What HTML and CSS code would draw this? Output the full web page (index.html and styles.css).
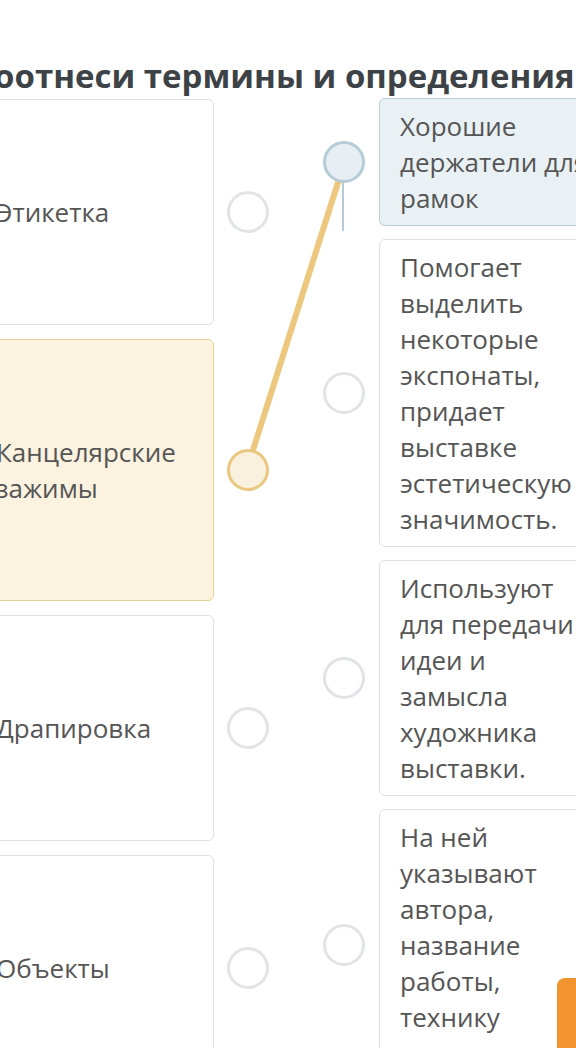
FILE: index.html
```html
<!DOCTYPE html>
<html lang="ru">
<head>
<meta charset="utf-8">
<title>Соотнеси термины и определения</title>
<link rel="stylesheet" href="styles.css">
</head>
<body>
<div class="page">
  <h1 class="title">Соотнеси термины и определения</h1>
  <div class="board">
    <svg class="links" width="400" height="600" viewBox="0 0 400 600">
      <line x1="368" y1="172" x2="368" y2="231" stroke="#b4cbd6" stroke-width="2"/>
      <line x1="369.5" y1="162" x2="272" y2="469" stroke="#ecc77d" stroke-width="6" stroke-linecap="round"/>
    </svg>
    <div class="col col-left">
      <div class="term">
        <div class="card">Этикетка</div>
        <span class="dot"></span>
      </div>
      <div class="term">
        <div class="card card-yellow">Канцелярские зажимы</div>
        <span class="dot dot-yellow"></span>
      </div>
      <div class="term">
        <div class="card">Драпировка</div>
        <span class="dot"></span>
      </div>
      <div class="term">
        <div class="card">Объекты</div>
        <span class="dot"></span>
      </div>
    </div>
    <div class="col col-right">
      <div class="def">
        <span class="dot dot-blue"></span>
        <div class="card card-blue">Хорошие держатели для рамок</div>
      </div>
      <div class="def">
        <span class="dot"></span>
        <div class="card">Помогает выделить некоторые экспонаты, придает выставке эстетическую значимость.</div>
      </div>
      <div class="def">
        <span class="dot"></span>
        <div class="card">Используют для передачи идеи и замысла художника выставки.</div>
      </div>
      <div class="def">
        <span class="dot"></span>
        <div class="card">На ней указывают автора, название работы, технику исполнения</div>
      </div>
    </div>
  </div>
</div>
<div class="action"></div>
</body>
</html>
```
FILE: styles.css
```css
html, body {
  margin: 0;
  padding: 0;
  background: #ffffff;
  overflow: hidden;
}
body {
  width: 576px;
  height: 1048px;
  position: relative;
  font-family: "Open Sans", "Noto Sans", sans-serif;
  color: #555555;
}
.page {
  margin-left: -25px;
  width: 700px;
}
.title {
  margin: 0;
  padding-top: 54px;
  height: 44px;
  font-size: 33px;
  line-height: 44px;
  font-weight: 700;
  color: #3d4247;
  white-space: nowrap;
  margin-left: -2px;
}
.board {
  position: relative;
  display: flex;
  align-items: flex-start;
}
.links {
  position: absolute;
  left: 0;
  top: -98px;
  z-index: 0;
  pointer-events: none;
}
.col {
  display: flex;
  flex-direction: column;
  gap: 13px;
  position: relative;
  z-index: 1;
}
.col-left {
  width: 294px;
  padding-top: 1px;
  gap: 14px;
}
.col-right {
  margin-left: 54px;
}
.term, .def {
  display: flex;
  align-items: center;
}
.card {
  box-sizing: border-box;
  border: 1px solid #e0e0e0;
  border-radius: 6px;
  background: #ffffff;
  font-size: 26px;
  line-height: 36px;
}
.term .card {
  width: 240px;
  padding: 94px 20px;
}
.def .card {
  width: 242px;
  padding: 9px 20px 9px 20px;
  margin-left: 14px;
}
.card-yellow {
  background: #fbf2df;
  border-color: #e9d196;
}
.card-blue {
  background: #e9f1f5;
  border-color: #b9ced9;
}
.dot {
  flex: none;
  box-sizing: border-box;
  width: 42px;
  height: 42px;
  border-radius: 50%;
  border: 3px solid #e1e4e6;
  background: #ffffff;
}
.term .dot {
  margin-left: 13px;
}
.dot-yellow {
  border-color: #e9c77f;
  background: #f9f0de;
}
.dot-blue {
  border-color: #b5ccd7;
  background: #e7eff5;
}
.action {
  position: absolute;
  left: 557px;
  top: 978px;
  width: 60px;
  height: 100px;
  border-radius: 8px;
  background: #f29330;
  z-index: 5;
}
```
